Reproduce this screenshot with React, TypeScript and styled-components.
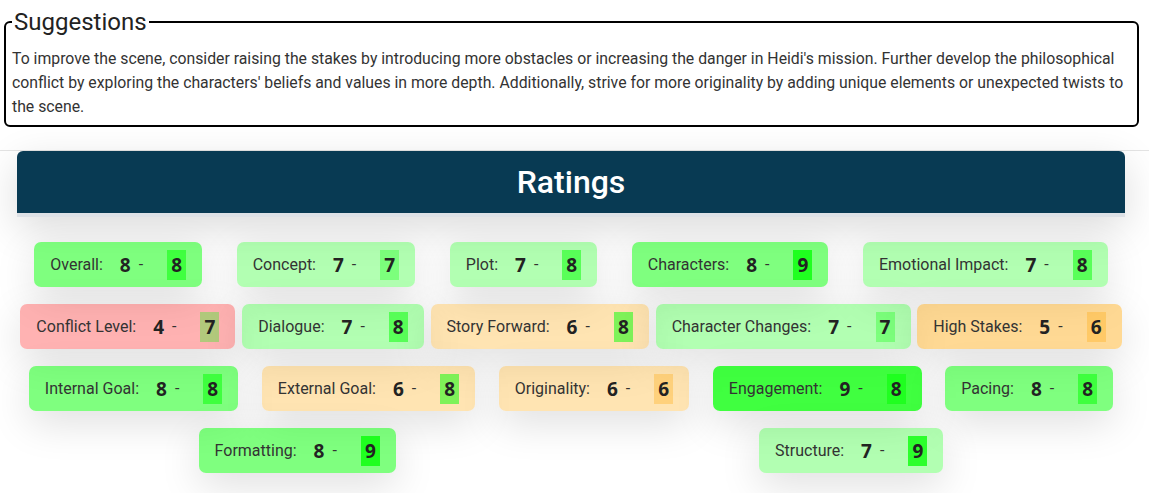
import React from 'react'
import styled, { createGlobalStyle } from 'styled-components'

const GlobalStyle = createGlobalStyle`
  body {
    margin: 0;
    background: #ffffff;
    font-family: Roboto, 'Liberation Sans', sans-serif;
  }
`

const SUGGESTION_TEXT =
  "To improve the scene, consider raising the stakes by introducing more obstacles or increasing the danger in Heidi's mission. Further develop the philosophical conflict by exploring the characters' beliefs and values in more depth. Additionally, strive for more originality by adding unique elements or unexpected twists to the scene."

type Rating = { label: string; score: number; value: number }

const ROWS: Rating[][] = [
  [
    { label: 'Overall', score: 8, value: 8 },
    { label: 'Concept', score: 7, value: 7 },
    { label: 'Plot', score: 7, value: 8 },
    { label: 'Characters', score: 8, value: 9 },
    { label: 'Emotional Impact', score: 7, value: 8 },
  ],
  [
    { label: 'Conflict Level', score: 4, value: 7 },
    { label: 'Dialogue', score: 7, value: 8 },
    { label: 'Story Forward', score: 6, value: 8 },
    { label: 'Character Changes', score: 7, value: 7 },
    { label: 'High Stakes', score: 5, value: 6 },
  ],
  [
    { label: 'Internal Goal', score: 8, value: 8 },
    { label: 'External Goal', score: 6, value: 8 },
    { label: 'Originality', score: 6, value: 6 },
    { label: 'Engagement', score: 9, value: 8 },
    { label: 'Pacing', score: 8, value: 8 },
  ],
  [
    { label: 'Formatting', score: 8, value: 9 },
    { label: 'Structure', score: 7, value: 9 },
  ],
]

const scoreColor = (n: number) => {
  if (n >= 9) return 'rgba(0, 255, 0, 0.75)'
  if (n === 8) return 'rgba(0, 255, 0, 0.5)'
  if (n === 7) return 'rgba(0, 255, 0, 0.3)'
  if (n === 6) return 'rgba(255, 165, 0, 0.3)'
  if (n === 5) return 'rgba(255, 165, 0, 0.42)'
  return 'rgba(255, 0, 0, 0.3)'
}

const Suggestions = styled.fieldset`
  margin: 8px 10px 0 4px;
  padding: 0 6px 6px;
  border: 2px solid #000;
  border-radius: 6px;
`

const Legend = styled.legend`
  padding: 0 2px;
  font-size: 24px;
  line-height: 28px;
  color: #222;
`

const SuggestionText = styled.p`
  margin: 11px 0 0;
  font-size: 15.8px;
  line-height: 24px;
  color: #333;
`

const RatingsSection = styled.section`
  margin-top: 23px;
  border-top: 1px solid #e4e4e4;
  padding: 0 0 20px 17px;
`

const RatingsHeader = styled.div`
  width: 1108px;
  height: 62px;
  background: #083a53;
  border-radius: 6px 6px 0 0;
  border-bottom: 4px solid #dde1e6;
  display: flex;
  align-items: center;
  justify-content: center;
  color: #fff;
  font-size: 32px;
  font-weight: 500;
  box-shadow: 0 12px 40px rgba(0, 0, 0, 0.14);
`

const ChipGrid = styled.div`
  width: 1108px;
  padding-top: 25px;
  display: flex;
  flex-direction: column;
  gap: 17px;
`

const ChipRow = styled.div`
  display: flex;
  justify-content: space-around;
`

const Chip = styled.div<{ $tint: string }>`
  height: 45px;
  padding: 0 16px;
  display: flex;
  align-items: center;
  border-radius: 7px;
  background: ${({ $tint }) => $tint};
  box-shadow: 0 12px 40px rgba(0, 0, 0, 0.13);
  color: #333;
  white-space: nowrap;
`

const ChipLabel = styled.span`
  font-size: 16px;
  margin-right: 17px;
`

const Score = styled.span`
  font-family: 'Open Sans', 'DejaVu Sans', sans-serif;
  font-weight: 700;
  font-size: 19px;
  color: #222;
  margin-right: 8px;
`

const Dash = styled.span`
  font-size: 16px;
`

const ValueBox = styled.span<{ $tint: string }>`
  margin-left: 24px;
  width: 19px;
  height: 30px;
  display: flex;
  align-items: center;
  justify-content: center;
  background: ${({ $tint }) => $tint};
  font-family: 'Open Sans', 'DejaVu Sans', sans-serif;
  font-weight: 700;
  font-size: 19px;
  color: #222;
`

const RatingChip = ({ rating }: { rating: Rating }) => (
  <Chip $tint={scoreColor(rating.score)}>
    <ChipLabel>{rating.label}:</ChipLabel>
    <Score>{rating.score}</Score>
    <Dash>-</Dash>
    <ValueBox $tint={scoreColor(rating.value)}>{rating.value}</ValueBox>
  </Chip>
)

const App = () => (
  <>
    <GlobalStyle />
    <Suggestions>
      <Legend>Suggestions</Legend>
      <SuggestionText>{SUGGESTION_TEXT}</SuggestionText>
    </Suggestions>
    <RatingsSection>
      <RatingsHeader>Ratings</RatingsHeader>
      <ChipGrid>
        {ROWS.map((row, i) => (
          <ChipRow key={i}>
            {row.map((r) => (
              <RatingChip key={r.label} rating={r} />
            ))}
          </ChipRow>
        ))}
      </ChipGrid>
    </RatingsSection>
  </>
)

export default App
